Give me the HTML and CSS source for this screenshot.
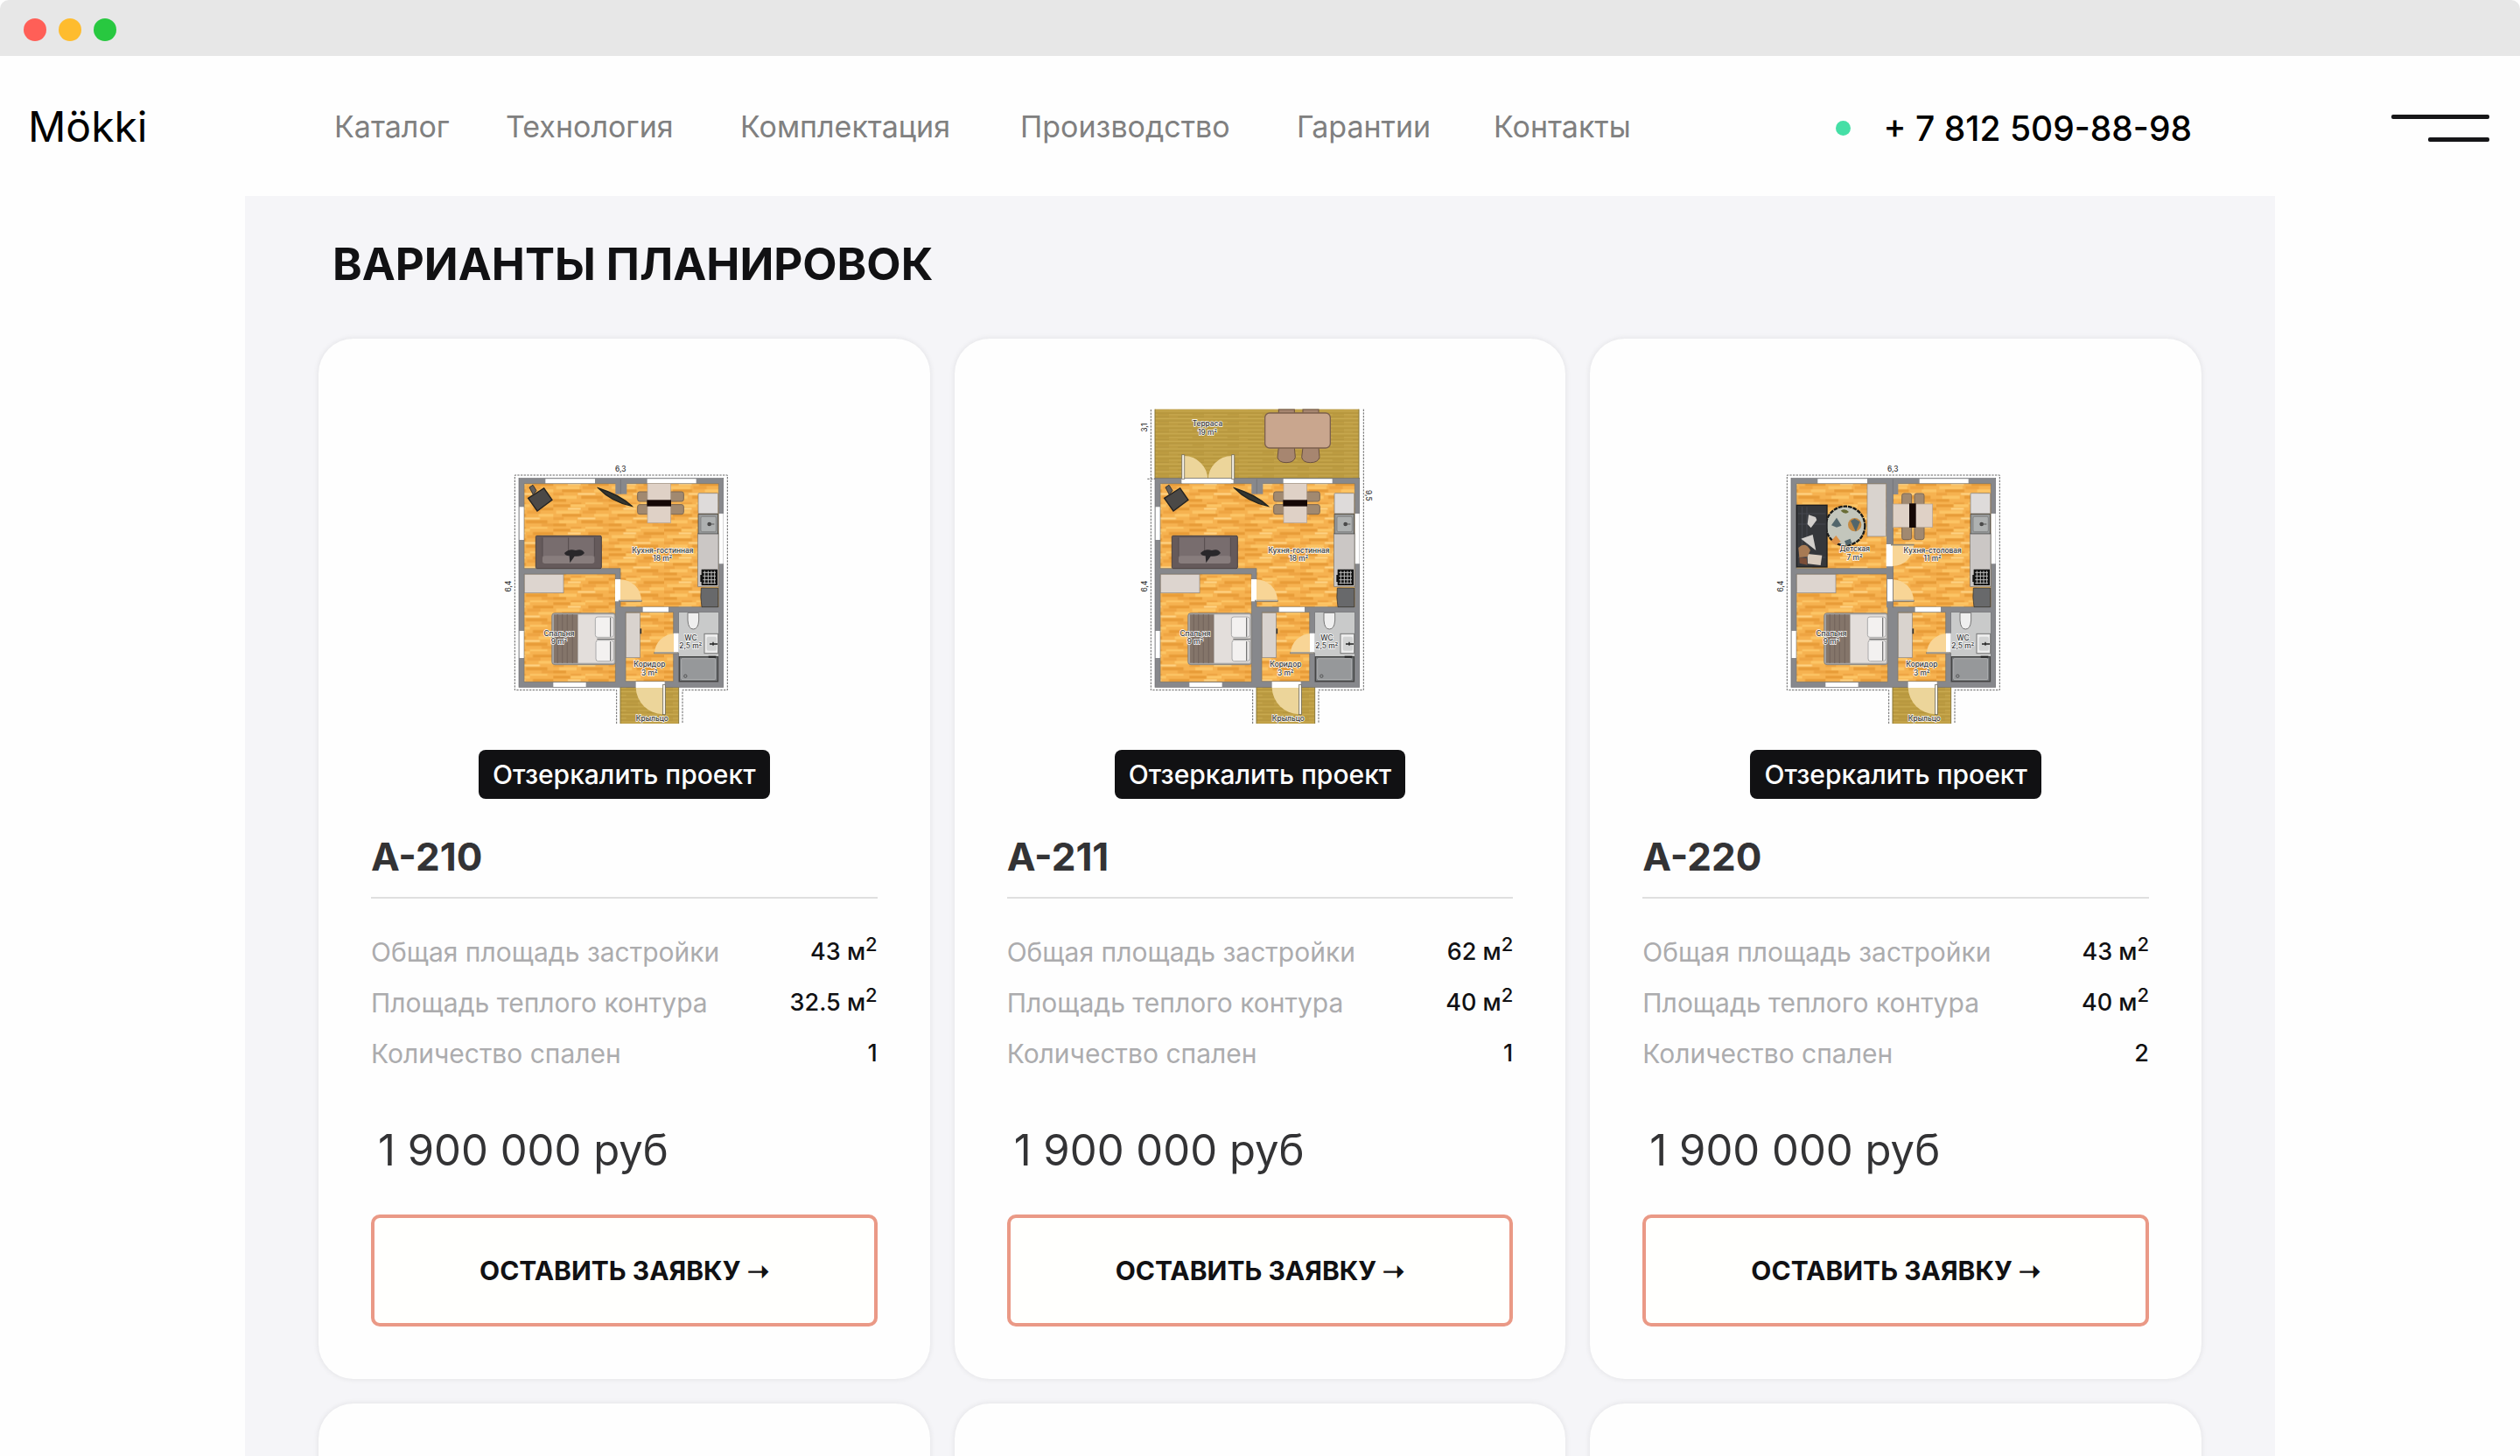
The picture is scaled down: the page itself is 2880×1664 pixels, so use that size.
FILE: index.html
```html
<!DOCTYPE html>
<html lang="ru">
<head>
    <meta charset="UTF-8">
    <meta name="viewport" content="width=device-width, initial-scale=1.0">
    <title>Mökki</title>
    <link rel="stylesheet" href="styles.css">
</head>
<body>
    <!-- Window bar -->
    <div class="window-bar">
        <span class="light red"></span>
        <span class="light yellow"></span>
        <span class="light green"></span>
    </div>

    <header class="header">
        <a href="#" class="logo">Mökki</a>
        <nav class="nav">
            <a href="#">Каталог</a>
            <a href="#">Технология</a>
            <a href="#">Комплектация</a>
            <a href="#">Производство</a>
            <a href="#">Гарантии</a>
            <a href="#">Контакты</a>
        </nav>
        <a href="tel:+78125098898" class="phone">+ 7 812 509-88-98</a>
        <button class="menu-button" aria-label="Меню">
            <span class="line"></span>
            <span class="line short"></span>
        </button>
    </header>

    <main class="layouts">
        <h2>ВАРИАНТЫ ПЛАНИРОВОК</h2>

        <div class="cards">
            <!-- A-210 -->
            <article class="card">
                <svg class="plan" viewBox="0 -160 864 1080">
                    <defs>
                        <pattern id="wood" width="190" height="84" patternUnits="userSpaceOnUse">
                            <rect width="190" height="84" fill="#f6b250"/>
                            <path d="M0 5h58M120 16h70M30 38h66M96 60h74M0 71h44" stroke="#e89c38" stroke-width="10"/>
                            <path d="M60 5h50M10 27h80M140 38h50M20 60h60M110 82h60" stroke="#fcc566" stroke-width="10"/>
                            <path d="M100 27h46M0 49h36M150 71h40M60 82h36" stroke="#eea442" stroke-width="10"/>
                            <path d="M84 49h60M50 16h44" stroke="#ffd588" stroke-width="6"/>
                        </pattern>
                        <pattern id="deck" width="120" height="26" patternUnits="userSpaceOnUse">
                            <rect width="120" height="26" fill="#bd9c42"/>
                            <path d="M0 4h120M0 17h80" stroke="#c9aa50" stroke-width="4"/>
                            <path d="M0 12h120M30 24h90" stroke="#ae8e3a" stroke-width="2"/>
                        </pattern>

                        <g id="house">
                            <rect x="420" y="790" width="200" height="130" fill="url(#deck)"/>
                            <path d="M420 795v125M620 795v125" stroke="#8a7838" stroke-width="3"/>
                            <rect x="72" y="79" width="701" height="716" fill="#87888c" stroke="#6c6d70" stroke-width="2"/>
                            <path d="M90 97H757V520H420V388H90z" fill="url(#wood)" stroke="#77736a" stroke-width="2"/>
                            <path d="M90 407h313v370H90zM438 538h164v237H438z" fill="url(#wood)" stroke="#77736a" stroke-width="2"/>
                            <rect x="620" y="538" width="137" height="239" fill="#c9caca" stroke="#707173" stroke-width="2"/>
                            <!-- windows and doorways -->
                            <path d="M163 81h170v15H163zM512 81h168v15H512zM74 602h15v93H74zM758 200h15v172H758zM190 779h112v15H190zM402 425h18v76h-18zM497 520h88v17h-88zM602 610h18v68h-18zM473 776h99v21h-99z" fill="#fff"/>
                            <path d="M420 426A72 72 0 0 1 492 498H420zM537 678A68 68 0 0 1 603 612V678z" fill="#f8d596"/>
                            <path d="M473 797A95 95 0 0 0 565 888V797z" fill="#ecd59a"/>
                            <path d="M414 499h80M535 678h84" stroke="#77736a" stroke-width="6"/>
                            <path d="M416 498h76M537 677h80" stroke="#ddd" stroke-width="2"/>
                            <rect x="565" y="787" width="9" height="102" fill="#f4f0e6" stroke="#5d5a50" stroke-width="2"/>
                            <!-- kitchen line -->
                            <g stroke="#777" stroke-width="2">
                                <rect x="686" y="268" width="70" height="182" fill="#cbc7c5"/>
                                <rect x="687" y="130" width="68" height="70" rx="3" fill="#dedbda"/>
                                <rect x="687" y="202" width="68" height="67" fill="#96999a" stroke="#333"/>
                                <rect x="696" y="210" width="52" height="52" rx="5" fill="#aeb1b1"/>
                                <path d="M697 455h58v65h-56q-6-33-2-65z" fill="#68696b" stroke="#252525"/>
                            </g>
                            <circle cx="725" cy="236" r="7" fill="#444"/>
                            <path d="M720 236h22" stroke="#555" stroke-width="3"/>
                            <path d="M698 391h55v55h-55zM694 410h6v24h-6z" fill="#111"/>
                            <path d="M703 402h44M703 414h44M703 427h44M703 438h44M709 396v45M721 396v45M732 396v45M743 396v45" stroke="#bbb" stroke-width="3"/>
                            <!-- bedroom -->
                            <rect x="91" y="408" width="134" height="64" fill="#ddd5cf" stroke="#8b8581" stroke-width="2"/>
                            <rect x="185" y="541" width="219" height="177" rx="10" fill="#a5a4a3" stroke="#777" stroke-width="2"/>
                            <rect x="192" y="546" width="82" height="166" fill="#84756a"/>
                            <path d="M205 546v166M221 546v166M238 546v166M256 546v166" stroke="#76675e" stroke-width="4"/>
                            <rect x="275" y="546" width="123" height="166" fill="#e3dedb"/>
                            <rect x="334" y="554" width="62" height="70" rx="8" fill="#f3f1f0" stroke="#aaa" stroke-width="3"/>
                            <rect x="336" y="634" width="60" height="72" rx="8" fill="#f3f1f0" stroke="#aaa" stroke-width="3"/>
                            <path d="M340 630h60M386 556v66M386 638v66" stroke="#777" stroke-width="4"/>
                            <!-- corridor and bathroom -->
                            <rect x="439" y="540" width="48" height="154" fill="#d9d3ce" stroke="#8b8581" stroke-width="2"/>
                            <path d="M490 594v18" stroke="#333" stroke-width="5"/>
                            <path d="M651 540h38v26q-2 30-19 30t-19-30z" fill="#efefef" stroke="#777" stroke-width="3"/>
                            <rect x="708" y="612" width="47" height="67" fill="#ececec" stroke="#777" stroke-width="3"/>
                            <rect x="716" y="622" width="34" height="48" rx="6" fill="#d2d3d3"/>
                            <path d="M726 647h27M738 640v12" stroke="#222" stroke-width="4"/>
                            <rect x="622" y="691" width="132" height="84" fill="#777a7d" stroke="#444" stroke-width="4"/>
                            <rect x="629" y="697" width="117" height="72" rx="3" fill="#96989a" stroke="#c1c2c3" stroke-width="2"/>
                            <circle cx="643" cy="757" r="5" fill="none" stroke="#333" stroke-width="2"/>
                            <path d="M722 691h26" stroke="#222" stroke-width="6"/>

                            <text x="210" y="619">Спальня</text>
                            <text x="210" y="646">9 m²</text>
                            <text x="520" y="726">Коридор</text>
                            <text x="520" y="754">3 m²</text>
                            <text x="661" y="634">WC</text>
                            <text x="661" y="662">2,5 m²</text>
                            <text x="529" y="912">Крыльцо</text>
                            <text transform="translate(46 449) rotate(-90)">6,4</text>
                        </g>

                        <g id="living">
                            <rect x="403" y="82" width="39" height="51" fill="#87888c"/>
                            <path d="M421 82v51" stroke="#6c6d70" stroke-width="2"/>
                            <rect x="74" y="177" width="15" height="113" fill="#fff"/>
                            <!-- armchair and tv -->
                            <path d="M104 147l54-34 28 40-51 38z" fill="#4b4947" stroke="#242322" stroke-width="4"/>
                            <path d="M108 110l12-8 12 19-11 14z" fill="#625e5b" stroke="#333" stroke-width="3"/>
                            <path d="M345 113q72 22 114 61q-70-15-114-61z" fill="#343631" stroke="#22231f" stroke-width="4"/>
                            <!-- sofa -->
                            <rect x="130" y="276" width="225" height="112" rx="4" fill="#655a5b" stroke="#4b4242" stroke-width="3"/>
                            <rect x="153" y="282" width="178" height="66" fill="#786d6e"/>
                            <path d="M242 282v66M153 282v64M331 282v64" stroke="#554b4c" stroke-width="3"/>
                            <rect x="153" y="345" width="178" height="26" rx="8" fill="#887d7d"/>
                            <path d="M228 335q16-17 39-9 22-8 30 9-12 14-34 11l-16 23-2-24q-14 0-17-10z" fill="#29272a"/>
                            <!-- dining table -->
                            <g fill="#a18970" stroke="#7c6854" stroke-width="3">
                                <rect x="479" y="125" width="40" height="33" rx="7"/>
                                <rect x="479" y="169" width="40" height="33" rx="7"/>
                                <rect x="588" y="125" width="49" height="33" rx="7"/>
                                <rect x="588" y="169" width="49" height="33" rx="7"/>
                            </g>
                            <rect x="513" y="97" width="79" height="135" fill="#dfd1c6" stroke="#b1a193" stroke-width="2"/>
                            <rect x="511" y="153" width="83" height="22" fill="#150806"/>
                            <text x="565" y="335">Кухня-гостинная</text>
                            <text x="565" y="363">18 m²</text>
                        </g>
                    </defs>
                    <path class="outline" d="M407 920V805H58V68H787V805H633V920"/>
                    <text x="421" y="56">6,3</text>
                    <use href="#house"/>
                    <use href="#living"/>
                </svg>
                <button class="mirror-button">Отзеркалить проект</button>
                <h3>A-210</h3>
                <table class="specs">
                    <tr><th>Общая площадь застройки</th><td>43 м<sup>2</sup></td></tr>
                    <tr><th>Площадь теплого контура</th><td>32.5 м<sup>2</sup></td></tr>
                    <tr><th>Количество спален</th><td>1</td></tr>
                </table>
                <p class="price">1 900 000 руб</p>
                <button class="order-button">ОСТАВИТЬ ЗАЯВКУ ➝</button>
            </article>

            <!-- A-211 -->
            <article class="card">
                <svg class="plan" viewBox="0 -160 864 1080">
                    <path class="outline" d="M407 920V805H58V-158M787-158V805H633V920M46 81H72"/>
                    <rect x="72" y="-158" width="699" height="240" fill="url(#deck)"/>
                    <path d="M72-158V80M771-158V80" stroke="#8a7838" stroke-width="3"/>
                    <!-- terrace table -->
                    <g fill="#a78670" stroke="#6b5142" stroke-width="3">
                        <rect x="496" y="-157" width="54" height="24"/>
                        <rect x="579" y="-157" width="54" height="24"/>
                        <path d="M496-27h54l3 34q-5 18-31 18t-30-18zM579-27h54l3 34q-5 18-31 18t-30-18z"/>
                    </g>
                    <rect x="449" y="-145" width="224" height="120" rx="16" fill="#c9a68e" stroke="#7c604e" stroke-width="4"/>
                    <path d="M172 2A82 82 0 0 1 253 82H172zM335 2A82 82 0 0 0 254 82H335z" fill="#ecd59a"/>
                    <use href="#house"/>
                    <use href="#living"/>
                    <path d="M165 80h176v16H165z" fill="#fff"/>
                    <path d="M164-2h9v84h-9zM335-2h9v84h-9z" fill="#f4f0e6" stroke="#5d5a50" stroke-width="2"/>
                    <text x="252" y="-99">Терраса</text>
                    <text x="252" y="-71">19 m²</text>
                    <text transform="translate(46 -95) rotate(-90)">3,1</text>
                    <text transform="translate(796 138) rotate(90)">9,5</text>
                </svg>
                <button class="mirror-button">Отзеркалить проект</button>
                <h3>A-211</h3>
                <table class="specs">
                    <tr><th>Общая площадь застройки</th><td>62 м<sup>2</sup></td></tr>
                    <tr><th>Площадь теплого контура</th><td>40 м<sup>2</sup></td></tr>
                    <tr><th>Количество спален</th><td>1</td></tr>
                </table>
                <p class="price">1 900 000 руб</p>
                <button class="order-button">ОСТАВИТЬ ЗАЯВКУ ➝</button>
            </article>

            <!-- A-220 -->
            <article class="card">
                <svg class="plan" viewBox="0 -160 864 1080">
                    <path class="outline" d="M407 920V805H58V68H787V805H633V920"/>
                    <text x="421" y="56">6,3</text>
                    <use href="#house"/>
                    <path d="M399 81h23v441h-23zM420 81h19v53h-19z" fill="#87888c"/>
                    <path d="M421 81v441" stroke="#6c6d70" stroke-width="2"/>
                    <path d="M398 305h22v76h-22zM402 425h18v76h-18z" fill="#fff"/>
                    <path d="M420 308H492A72 72 0 0 1 420 380z" fill="#f8d596"/>
                    <path d="M414 307h80" stroke="#8d8676" stroke-width="5"/>
                    <!-- children's room -->
                    <rect x="333" y="98" width="64" height="180" fill="#d9d3ce" stroke="#8b8581" stroke-width="2"/>
                    <circle cx="258" cy="242" r="67" fill="#c3c6bc" stroke="#191a19" stroke-width="7" stroke-dasharray="14 3"/>
                    <g fill="#52666c">
                        <path d="M210 240l18-26 17 27-17 6z"/>
                        <path d="M255 294l20-8 5 15-18 9z"/>
                        <circle cx="290" cy="238" r="23" fill="#c38942"/>
                        <path d="M276 225l14-8 18 11-14 34z"/>
                        <path d="M208 295l18-20 16 21-17 12z" fill="#dd9146"/>
                        <path d="M242 190q15-10 28 4-12 12-28-4z" fill="#686c35"/>
                    </g>
                    <rect x="91" y="171" width="104" height="212" fill="#35373b" stroke="#1c1d20" stroke-width="4"/>
                    <path d="M110 177v196M126 177v196M96 200h94M96 236h94M96 350h94" stroke="#464951" stroke-width="3"/>
                    <path d="M132 204l24 8 4 10-20 27-12-13zM106 286l40-14 11 54z" fill="#d2cfcc"/>
                    <path d="M128 338l50 5-5 34-44-5z" fill="#d8cbbd"/>
                    <path d="M97 317q23-23 41 8l-10 23-28 2z" fill="#a77a54"/>
                    <path d="M100 350l25 3 3 23-27-6z" fill="#7b4e38"/>
                    <!-- dining table -->
                    <g fill="#a18970" stroke="#7c6854" stroke-width="3">
                        <rect x="452" y="131" width="33" height="42" rx="7"/>
                        <rect x="495" y="131" width="33" height="42" rx="7"/>
                        <rect x="452" y="240" width="33" height="49" rx="7"/>
                        <rect x="495" y="240" width="33" height="49" rx="7"/>
                    </g>
                    <rect x="422" y="167" width="135" height="80" fill="#dfd1c6" stroke="#b1a193" stroke-width="2"/>
                    <rect x="477" y="165" width="23" height="83" fill="#150806"/>
                    <text x="290" y="330">Детская</text>
                    <text x="290" y="358">7 m²</text>
                    <text x="557" y="335">Кухня-столовая</text>
                    <text x="557" y="363">11 m²</text>
                </svg>
                <button class="mirror-button">Отзеркалить проект</button>
                <h3>A-220</h3>
                <table class="specs">
                    <tr><th>Общая площадь застройки</th><td>43 м<sup>2</sup></td></tr>
                    <tr><th>Площадь теплого контура</th><td>40 м<sup>2</sup></td></tr>
                    <tr><th>Количество спален</th><td>2</td></tr>
                </table>
                <p class="price">1 900 000 руб</p>
                <button class="order-button">ОСТАВИТЬ ЗАЯВКУ ➝</button>
            </article>

            <!-- Next row, still empty -->
            <article class="card"></article>
            <article class="card"></article>
            <article class="card"></article>
        </div>
    </main>
</body>
</html>
```
FILE: styles.css
```css
* {
    box-sizing: border-box;
}

body {
    margin: 0;
    height: 100vh;
    display: flex;
    flex-direction: column;
    overflow: hidden;
    font-family: Inter, "Liberation Sans", sans-serif;
    background-color: #fefefe;
    color: #111113;
}

a {
    color: inherit;
    text-decoration: none;
}

button {
    font-family: inherit;
    cursor: pointer;
}

/* Window bar */

.window-bar {
    flex: none;
    display: flex;
    align-items: center;
    gap: 14px;
    height: 64px;
    padding: 4px 27px 0;
    background-color: #e7e7e7;
    border-radius: 10px 10px 0 0;
}

.light {
    width: 26px;
    height: 26px;
    border-radius: 50%;
}

.red {
    background-color: #ff5f57;
}

.yellow {
    background-color: #febc2e;
}

.green {
    background-color: #28c840;
}

/* Header */

.header {
    flex: none;
    display: flex;
    align-items: center;
    height: 160px;
    padding: 0 35px 0 32px;
    background-color: #fefefe;
}

.logo {
    width: 350px;
    font-size: 48px;
    font-weight: 400;
    color: #000;
}

.nav {
    display: grid;
    grid-template-columns: 196px 268px 320px 316px 225px auto;
    font-size: 34px;
    color: #808080;
}

.phone,
.menu-button {
    margin-top: 4px;
}

.phone {
    display: flex;
    align-items: center;
    gap: 38px;
    margin-left: auto;
    font-size: 39px;
    font-weight: 500;
    color: #000;
}

.phone::before {
    content: "";
    width: 17px;
    height: 17px;
    border-radius: 50%;
    background-color: #45dfa6;
}

.menu-button {
    display: flex;
    flex-direction: column;
    align-items: flex-end;
    gap: 21px;
    margin-left: 228px;
    padding: 0;
    border: none;
    background: none;
}

.line {
    width: 112px;
    height: 5px;
    border-radius: 2px;
    background-color: #161618;
}

.line.short {
    width: 70px;
}

/* Layout cards */

.layouts {
    flex: 1;
    min-height: 0;
    margin: 0 280px;
    padding: 48px 84px 0;
    overflow: hidden;
    background-color: #f5f5f8;
}

.layouts h2 {
    margin: 0 0 55px 16px;
    font-size: 51px;
    line-height: 60px;
    font-weight: 700;
}

.cards {
    display: grid;
    grid-template-columns: repeat(3, 1fr);
    gap: 28px;
}

.card {
    min-height: 200px;
    padding: 80px 60px 60px;
    border-radius: 40px;
    background-color: #fefefe;
    box-shadow: 0 0 4px 2px #e9e9ec;
}

.plan {
    display: block;
    width: 288px;
    height: 360px;
    margin: 0 auto 30px;
}

.plan text {
    font-size: 25px;
    font-weight: 500;
    text-anchor: middle;
    fill: #333;
    stroke: #fff;
    stroke-width: 4px;
    paint-order: stroke;
}

.outline {
    fill: none;
    stroke: #666;
    stroke-width: 3px;
    stroke-dasharray: 7 4;
}

.mirror-button {
    display: block;
    height: 56px;
    margin: 0 auto 40px;
    padding: 0 16px;
    border: none;
    border-radius: 8px;
    background-color: #111113;
    color: #fff;
    font-size: 30px;
    font-weight: 500;
}

.card h3 {
    margin: 0 0 32px;
    padding-bottom: 20px;
    border-bottom: 2px solid #dfdfdf;
    font-size: 44px;
    line-height: 52px;
    font-weight: 700;
    color: #333335;
}

.specs {
    width: 100%;
    border-collapse: collapse;
    line-height: 36px;
}

.specs th,
.specs td {
    height: 58px;
    padding: 0;
    font-weight: 500;
}

.specs th {
    text-align: left;
    font-size: 30px;
    font-weight: 400;
    color: #acacae;
}

.specs td {
    text-align: right;
    font-size: 27px;
}

.specs sup {
    font-size: 22px;
    line-height: 0;
}

.price {
    margin: 50px 0 41px;
    padding-left: 8px;
    font-size: 49px;
    line-height: 64px;
    color: #333335;
}

.order-button {
    display: block;
    width: 100%;
    height: 128px;
    border: 4px solid #ea9986;
    border-radius: 10px;
    background-color: #fffffd;
    color: #111113;
    font-size: 30px;
    font-weight: 700;
}
```
